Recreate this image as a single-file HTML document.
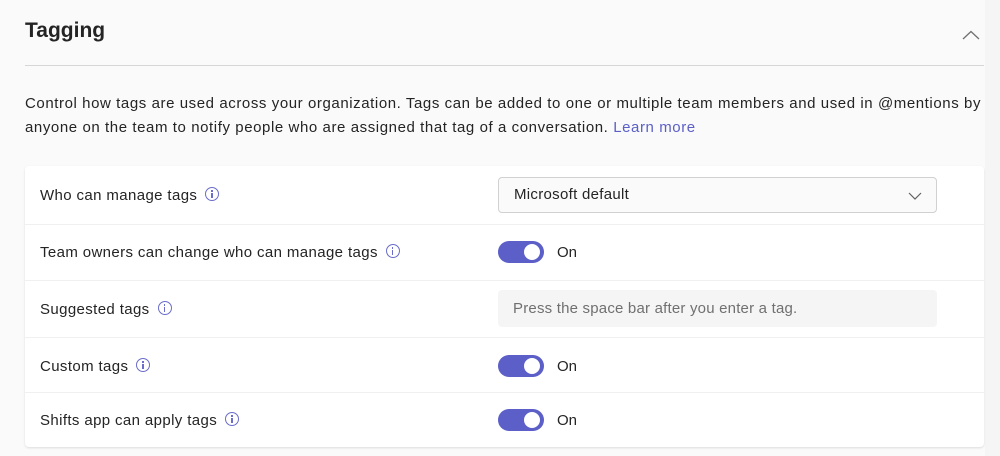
<!DOCTYPE html>
<html><head><style>
body{margin:0;width:1000px;height:456px;background:#f5f5f5;font-family:"Liberation Sans",sans-serif;color:#242424;position:relative;overflow:hidden}
.wrap{position:absolute;left:0;top:0;width:985px;height:456px;background:#fafafa}
.title{position:absolute;left:25px;top:19px;font-size:21px;font-weight:bold}
.chev{position:absolute;left:962px;top:30px}
.hr{position:absolute;left:25px;top:65px;width:959px;height:1px;background:#d6d6d6}
.desc{position:absolute;left:25px;top:92px;width:962px;font-size:15px;line-height:24px;color:#242424;letter-spacing:.58px}
.desc a{color:#5b5fc7;text-decoration:none}
.card{position:absolute;left:25px;top:166px;width:959px;height:281px;background:#fff;border-radius:4px;box-shadow:0 1px 2px rgba(0,0,0,.12)}
.row{position:absolute;left:0;width:959px;border-bottom:1px solid #f0f0f0}
.lbl{position:absolute;left:15px;font-size:15px;color:#242424;letter-spacing:.38px}
.info{display:inline-block;width:14px;height:14px;border:1.3px solid #6a6dc9;border-radius:50%;vertical-align:-1px;margin-left:8px;position:relative;box-sizing:border-box}
.info:after{content:"";position:absolute;left:5px;top:5px;width:1.4px;height:4.5px;background:#6a6dc9}
.info:before{content:"";position:absolute;left:5px;top:2.3px;width:1.4px;height:1.5px;background:#6a6dc9}
.tog{position:absolute;left:473px;width:46px;height:22px;border-radius:11px;background:#5b5fc7}
.tog:after{content:"";position:absolute;right:4px;top:3px;width:16px;height:16px;border-radius:50%;background:#fff}
.on{position:absolute;left:532px;font-size:15px}
.sel{position:absolute;left:473px;top:11px;width:439px;height:36px;border:1px solid #d1d1d1;border-radius:4px;background:#fafafa;box-sizing:border-box;font-size:15px;line-height:34px;padding-left:15px;letter-spacing:.3px}
.inp{position:absolute;left:473px;top:124px;width:439px;height:37px;background:#f5f5f5;border-radius:4px;font-size:15px;line-height:37px;padding-left:15px;box-sizing:border-box;color:#707070;letter-spacing:.2px}
</style></head><body><div class="wrap">
<div class="title">Tagging</div>
<svg class="chev" width="18" height="10"><path d="M1 9 L9 1.5 L17 9" fill="none" stroke="#707070" stroke-width="1.3"/></svg>
<div class="hr"></div>
<div class="desc">Control how tags are used across your organization. Tags can be added to one or multiple team members and used in @mentions by anyone on the team to notify people who are assigned that tag of a conversation. <a>Learn more</a></div>
<div class="card">
<div class="row" style="top:0;height:58px"></div>
<div class="row" style="top:59px;height:55px"></div>
<div class="row" style="top:115px;height:56px"></div>
<div class="row" style="top:172px;height:54px"></div>
<div class="lbl" style="top:21px">Who can manage tags<span class="info"></span></div>
<div class="sel">Microsoft default<svg style="position:absolute;right:14px;top:14px" width="14" height="8"><path d="M1 1 L7 7 L13 1" fill="none" stroke="#616161" stroke-width="1.2"/></svg></div>
<div class="lbl" style="top:78px">Team owners can change who can manage tags<span class="info"></span></div>
<div class="tog" style="top:75px"></div><div class="on" style="top:78px">On</div>
<div class="lbl" style="top:135px">Suggested tags<span class="info"></span></div>
<div class="inp">Press the space bar after you enter a tag.</div>
<div class="lbl" style="top:192px">Custom tags<span class="info"></span></div>
<div class="tog" style="top:189px"></div><div class="on" style="top:192px">On</div>
<div class="lbl" style="top:246px">Shifts app can apply tags<span class="info"></span></div>
<div class="tog" style="top:243px"></div><div class="on" style="top:246px">On</div>
</div>
</div></body></html>
